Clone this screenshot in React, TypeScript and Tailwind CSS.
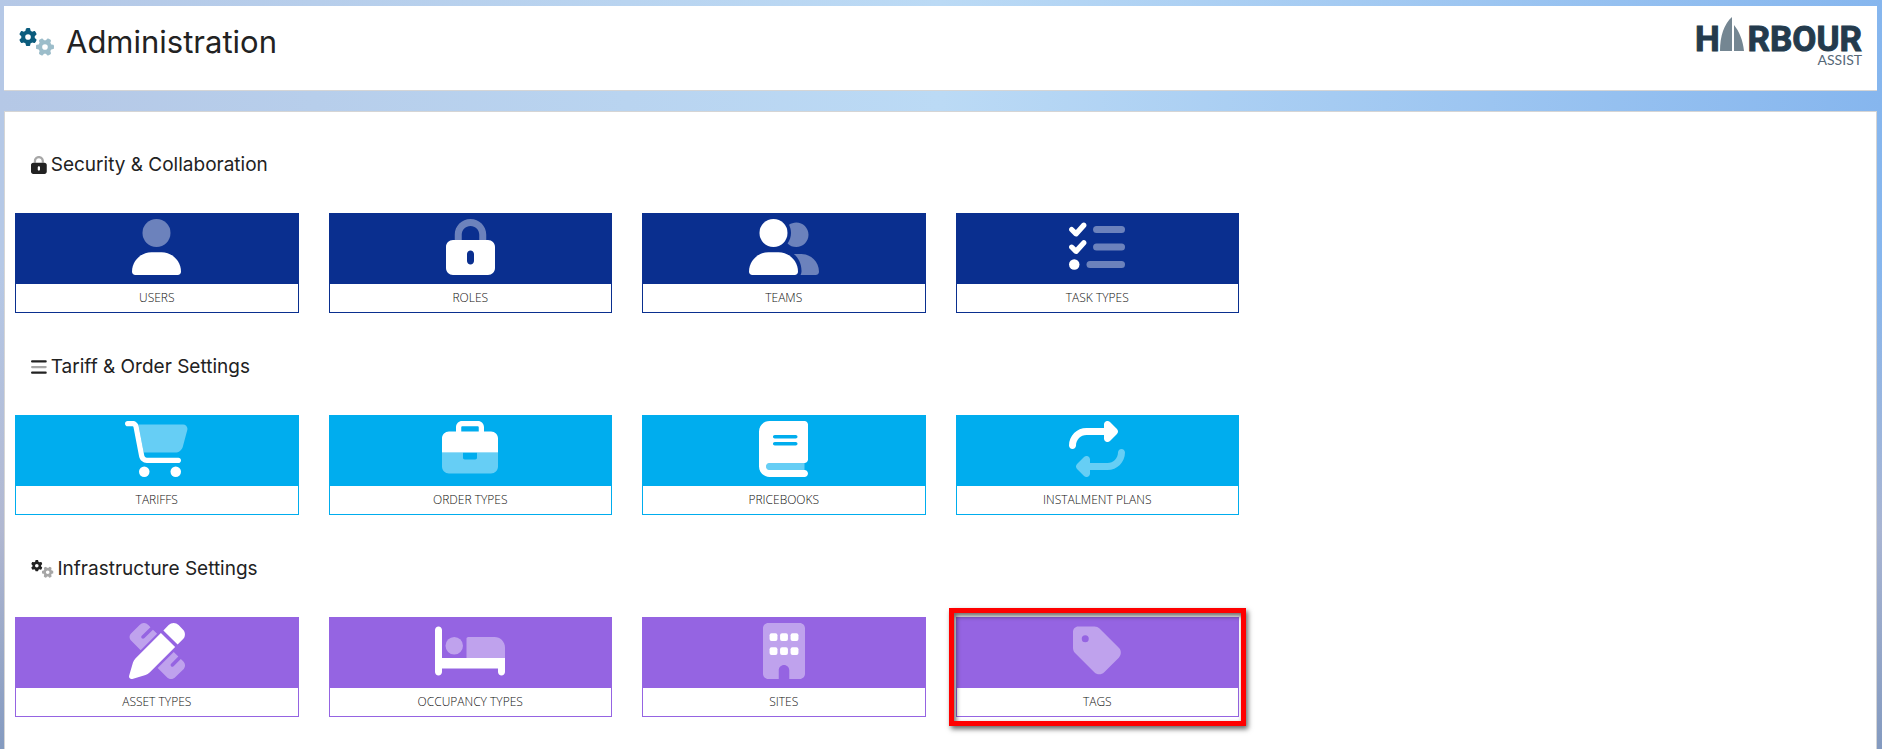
import type { ReactNode } from "react";
import { FaGear } from "react-icons/fa6";

const BODY = "M0 482.3C0 383.8 79.8 304 178.3 304h91.4C368.2 304 448 383.8 448 482.3c0 16.4-13.3 29.7-29.7 29.7H29.7C13.3 512 0 498.7 0 482.3z";

function Glyph({ w, className, children }: { w: number; className: string; children: ReactNode }) {
  return (
    <svg viewBox={`0 0 ${w} 512`} className={className} fill="currentColor" aria-hidden="true">
      {children}
    </svg>
  );
}

function LockShape() {
  return (
    <>
      <path opacity=".4" d="M80 144C80 64.5 144.5 0 224 0s144 64.5 144 144v48h-64v-48c0-44.2-35.8-80-80-80s-80 35.8-80 80v48H80z" />
      <path d="M64 192h320c35.3 0 64 28.7 64 64v192c0 35.3-28.7 64-64 64H64c-35.3 0-64-28.7-64-64V256c0-35.3 28.7-64 64-64zm160 96c-17.7 0-32 14.3-32 32v64c0 17.7 14.3 32 32 32s32-14.3 32-32v-64c0-17.7-14.3-32-32-32z" />
    </>
  );
}

function Gears({ className }: { className: string }) {
  return (
    <svg viewBox="0 0 640 512" className={className} fill="currentColor" aria-hidden="true">
      <FaGear x="0" y="0" size={330} />
      <g opacity=".4" transform="rotate(90 475 347)">
        <FaGear x="310" y="182" size={330} />
      </g>
    </svg>
  );
}

const icons: Record<string, ReactNode> = {
  user: (
    <Glyph w={448} className="h-14">
      <circle cx="224" cy="128" r="128" opacity=".4" />
      <path d={BODY} />
    </Glyph>
  ),
  lock: (
    <Glyph w={448} className="h-14">
      <LockShape />
    </Glyph>
  ),
  group: (
    <Glyph w={640} className="h-14">
      <circle cx="224" cy="128" r="128" />
      <path d={BODY} />
      <path opacity=".4" d="M432 256c-31 0-59-12.6-79.3-32.9C372.4 196.5 384 163.6 384 128c0-26.8-6.6-52.1-18.3-74.3C384.3 40.1 407.2 32 432 32c61.9 0 112 50.1 112 112s-50.1 112-112 112zM609.3 512H471.4c5.4-9.4 8.6-20.3 8.6-32v-8c0-60.7-27.1-115.2-69.8-151.8c2.4-.1 4.7-.2 7.1-.2h61.4C567.8 320 640 392.2 640 481.3c0 17-13.8 30.7-30.7 30.7z" />
    </Glyph>
  ),
  tasks: (
    <Glyph w={512} className="h-14">
      <path d="M152.1 38.2c9.9 8.9 10.7 24 1.8 33.9l-72 80c-4.4 4.9-10.6 7.8-17.2 7.9s-12.9-2.4-17.6-7L7 113C-2.3 103.6-2.3 88.4 7 79s24.6-9.4 33.9 0l22.1 22.1 55.1-61.2c8.9-9.9 24-10.7 33.9-1.8zm0 160c9.9 8.9 10.7 24 1.8 33.9l-72 80c-4.4 4.9-10.6 7.8-17.2 7.9s-12.9-2.4-17.6-7L7 273c-9.4-9.4-9.4-24.6 0-33.9s24.6-9.4 33.9 0l22.1 22.1 55.1-61.2c8.9-9.9 24-10.7 33.9-1.8z" />
      <circle cx="48" cy="416" r="48" />
      <g opacity=".4">
        <rect x="220" y="64" width="292" height="64" rx="32" />
        <rect x="220" y="224" width="292" height="64" rx="32" />
        <rect x="160" y="384" width="352" height="64" rx="32" />
      </g>
    </Glyph>
  ),
  cart: (
    <Glyph w={576} className="h-14">
      <path opacity=".4" d="M122 32h409c26.3 0 45.5 25 38.6 50.4l-41 152.3c-8.5 31.4-37 53.3-69.5 53.3H170.7z" />
      <path d="M0 24C0 10.7 10.7 0 24 0H69.5c26.9 0 50 19.1 55 45.5l51.6 271c2.2 11.3 12.1 19.5 23.6 19.5H488c13.3 0 24 10.7 24 24s-10.7 24-24 24H199.7c-34.6 0-64.3-24.6-70.7-58.5L77.4 54.5c-.7-3.8-4-6.5-7.9-6.5H24C10.7 48 0 37.3 0 24z" />
      <circle cx="176" cy="464" r="48" />
      <circle cx="464" cy="464" r="48" />
    </Glyph>
  ),
  briefcase: (
    <Glyph w={512} className="h-14">
      <path d="M184 48H328c4.4 0 8 3.6 8 8V96H176V56c0-4.4 3.6-8 8-8zm-56 8V96H64C28.7 96 0 124.7 0 160v128h512V160c0-35.3-28.7-64-64-64H384V56c0-30.9-25.1-56-56-56H184c-30.9 0-56 25.1-56 56z" />
      <path opacity=".4" d="M0 288v128c0 35.3 28.7 64 64 64h384c35.3 0 64-28.7 64-64V288H320v48c0 8.800-7.200 16-16 16h-96c-8.800 0-16-7.200-16-16v-48z" />
    </Glyph>
  ),
  book: (
    <Glyph w={448} className="h-14">
      <path d="M96 0C43 0 0 43 0 96V416c0 53 43 96 96 96H416c17.7 0 32-14.3 32-32s-14.3-32-32-32H96c-17.7 0-32-14.3-32-32s14.3-32 32-32H416c17.7 0 32-14.3 32-32V32c0-17.7-14.3-32-32-32H96zm32 144c0-8.8 7.2-16 16-16H336c8.8 0 16 7.2 16 16s-7.2 16-16 16H144c-8.8 0-16-7.2-16-16zm16 48H336c8.8 0 16 7.2 16 16s-7.2 16-16 16H144c-8.8 0-16-7.2-16-16s7.2-16 16-16z" />
      <path opacity=".4" d="M96 384H416v64H96c-17.7 0-32-14.3-32-32s14.3-32 32-32z" />
    </Glyph>
  ),
  repeat: (
    <Glyph w={512} className="h-14">
      <path d="M0 224c0 17.7 14.3 32 32 32s32-14.3 32-32c0-53 43-96 96-96H320v32c0 12.9 7.8 24.6 19.8 29.6s25.7 2.2 34.9-6.9l64-64c12.5-12.5 12.5-32.8 0-45.3l-64-64c-9.2-9.2-22.9-11.9-34.9-6.9S320 19.1 320 32V64H160C71.6 64 0 135.6 0 224z" />
      <path opacity=".4" d="M512 288c0-17.7-14.3-32-32-32s-32 14.3-32 32c0 53-43 96-96 96H192V352c0-12.9-7.8-24.6-19.8-29.6s-25.7-2.2-34.9 6.9l-64 64c-12.5 12.5-12.5 32.8 0 45.3l64 64c9.2 9.2 22.9 11.9 34.9 6.9s19.8-16.6 19.8-29.6V448H352c88.4 0 160-71.6 160-160z" />
    </Glyph>
  ),
  pencilRuler: (
    <Glyph w={512} className="h-14">
      <path opacity=".4" d="M18.7 161l88 88L257 98.700l-38-38-79.700 79.300c-6 6-16.600 6-22.600 0s-6-16.600 0-22.600L196 38l-19.300-19.300c-25-25-55-25-80 0L18.700 96.700c-18 18-18 46 0 64.300zM262 411L409 264l42 42-66 66c-6 6-6 16 0 22.600s16 6 22.600 0l66-66 19.700 19.700c25 25 25 55 0 80L424.700 493c-25 25-55 25-80 0z" />
      <path d="M362.700 19.300L314.300 67.700 444.300 197.700l48.400-48.400c25-25 25-65.500 0-90.500L453.300 19.300c-25-25-65.500-25-90.500 0zM291.700 90.300L58.600 323.500c-10.400 10.400-18 23.300-22.200 37.400L1 481.200C-1.500 489.700 .8 498.800 7 505s15.300 8.500 23.700 6.100l120.300-35.400c14.100-4.200 27-11.800 37.400-22.200L421.700 220.300z" />
    </Glyph>
  ),
  bed: (
    <Glyph w={640} className="h-14">
      <path d="M32 32c17.700 0 32 14.300 32 32v256h576v128c0 17.700-14.300 32-32 32s-32-14.300-32-32v-32H64v32c0 17.700-14.300 32-32 32S0 465.700 0 448V64c0-17.700 14.300-32 32-32z" />
      <circle cx="176" cy="208" r="80" opacity=".4" />
      <path opacity=".4" d="M288 144c0-8.800 7.200-16 16-16h240c53 0 96 43 96 96v96H288z" />
    </Glyph>
  ),
  building: (
    <Glyph w={384} className="h-14">
      <path opacity=".4" d="M48 0C21.500 0 0 21.500 0 48v416c0 26.500 21.500 48 48 48h96v-80c0-26.500 21.500-48 48-48s48 21.500 48 48v80h96c26.500 0 48-21.500 48-48V48c0-26.500-21.500-48-48-48z" />
      {[60, 156, 252].map((x) => (
        <g key={x}>
          <rect x={x} y="94" width="72" height="70" rx="18" />
          <rect x={x} y="222" width="72" height="70" rx="18" />
        </g>
      ))}
    </Glyph>
  ),
  tag: (
    <Glyph w={448} className="h-14">
      <path opacity=".4" d="M0 80V229.500c0 17 6.700 33.300 18.700 45.300l176 176c25 25 65.500 25 90.500 0L418.700 317.300c25-25 25-65.500 0-90.500l-176-176c-12-12-28.300-18.700-45.300-18.700H48C21.500 32 0 53.500 0 80zm112 32a32 32 0 1 1 0 64 32 32 0 1 1 0-64z" />
    </Glyph>
  ),
};

type Tile = { label: string; icon: string; highlighted?: boolean };
type Section = { title: string; icon: ReactNode; border: string; fill: string; tiles: Tile[] };

const sections: Section[] = [
  {
    title: "Security & Collaboration",
    icon: (
      <Glyph w={448} className="h-[18px]">
        <LockShape />
      </Glyph>
    ),
    border: "border-[#0a2f8f]",
    fill: "bg-[#0a2f8f]",
    tiles: [
      { label: "USERS", icon: "user" },
      { label: "ROLES", icon: "lock" },
      { label: "TEAMS", icon: "group" },
      { label: "TASK TYPES", icon: "tasks" },
    ],
  },
  {
    title: "Tariff & Order Settings",
    icon: (
      <Glyph w={448} className="h-[18px]">
        <rect y="64" width="448" height="64" rx="32" />
        <rect y="224" width="448" height="64" rx="32" opacity=".4" />
        <rect y="384" width="448" height="64" rx="32" />
      </Glyph>
    ),
    border: "border-[#00adee]",
    fill: "bg-[#00adee]",
    tiles: [
      { label: "TARIFFS", icon: "cart" },
      { label: "ORDER TYPES", icon: "briefcase" },
      { label: "PRICEBOOKS", icon: "book" },
      { label: "INSTALMENT PLANS", icon: "repeat" },
    ],
  },
  {
    title: "Infrastructure Settings",
    icon: <Gears className="h-[18px]" />,
    border: "border-[#9564e2]",
    fill: "bg-[#9564e2]",
    tiles: [
      { label: "ASSET TYPES", icon: "pencilRuler" },
      { label: "OCCUPANCY TYPES", icon: "bed" },
      { label: "SITES", icon: "building" },
      { label: "TAGS", icon: "tag", highlighted: true },
    ],
  },
];

function Logo() {
  return (
    <svg viewBox="0 0 168 52" className="h-[52px] w-[168px]" role="img" aria-label="Harbour Assist">
      <g fill="#243b4d" stroke="#243b4d" strokeWidth="1" fontFamily="Roboto, sans-serif" fontWeight="700" fontSize="35">
        <text x="0" y="35">H</text>
        <text x="167" y="35" textAnchor="end">RBOUR</text>
      </g>
      <path fill="#748692" d="M37 1v34H25C25 20 29 8 37 1zM39 9c5 6 9 15 10 26H39z" />
      <text x="167" y="49" textAnchor="end" fill="#566877" fontFamily="Lato, sans-serif" fontSize="14">ASSIST</text>
    </svg>
  );
}

export default function App() {
  return (
    <div className="flex min-h-screen flex-col gap-5 bg-[linear-gradient(180deg,transparent_35%,#b0b4ccd0_70%,#8299bf),linear-gradient(90deg,#b5c8e6,#bbdaf5_50%,#86b6ee)] pt-1.5 pr-[5px] pl-1 font-['Inter',sans-serif] text-[#222]">
      <header className="flex h-[85px] items-start justify-between border-b border-[#d5d5d5] bg-white pr-3.5 pl-[15px]">
        <h1 className="flex items-center gap-3 pt-4 text-[31px] leading-10">
          <span className="text-[#0b5c7d]">
            <Gears className="h-7" />
          </span>
          Administration
        </h1>
        <div className="pt-2.5">
          <Logo />
        </div>
      </header>

      <main className="grow border border-b-0 border-[#d5d5d5] bg-white pt-10 pr-2.5 pl-2.5">
        {sections.map((s) => (
          <section key={s.title} className="mb-[41px]">
            <h2 className="mb-9 flex items-center gap-1 pl-4 text-[19px] leading-[25px]">
              {s.icon}
              {s.title}
            </h2>
            <div className="grid grid-cols-6 gap-[30px]">
              {s.tiles.map((t) => (
                <a key={t.label} href="#" className={`relative block border ${s.border}`}>
                  <span className={`flex h-[70px] justify-center pt-[5px] text-white ${s.fill}`}>{icons[t.icon]}</span>
                  <span className="block bg-white text-center font-['Open_Sans',sans-serif] text-[12px] leading-7 font-light text-[#111]">
                    {t.label}
                  </span>
                  {t.highlighted && (
                    <span className="absolute -inset-x-2 -top-2.5 -bottom-2.5 border-5 border-[#fe0000] shadow-[2px_3px_5px_rgba(0,0,0,0.6),inset_2px_3px_5px_rgba(0,0,0,0.6)]" />
                  )}
                </a>
              ))}
            </div>
          </section>
        ))}
      </main>
    </div>
  );
}
